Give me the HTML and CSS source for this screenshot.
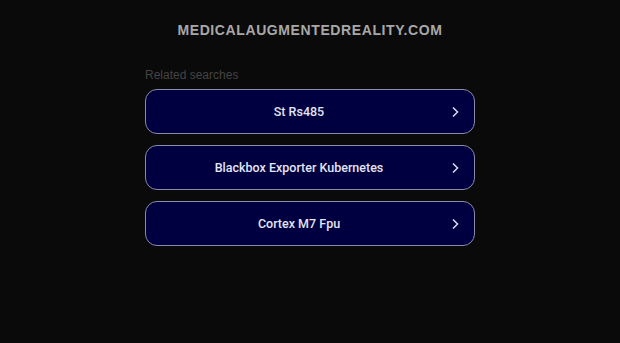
FILE: index.html
```html
<!DOCTYPE html>
<html lang="en">
<head>
    <meta charset="UTF-8">
    <meta name="viewport" content="width=device-width, initial-scale=1.0">
    <title>medicalaugmentedreality.com</title>
    <link rel="stylesheet" href="styles.css">
</head>
<body>
    <div class="header">
        <h1 class="domain">medicalaugmentedreality.com</h1>
    </div>
    <div class="container">
        <p class="related">Related searches</p>
        <a class="search-link" href="#">
            <span>St Rs485</span>
            <svg class="arrow" width="10" height="14" viewBox="0 0 10 14"><path d="M3 2.5 L7.5 7 L3 11.5" fill="none" stroke="#dde" stroke-width="1.5"/></svg>
        </a>
        <a class="search-link" href="#">
            <span>Blackbox Exporter Kubernetes</span>
            <svg class="arrow" width="10" height="14" viewBox="0 0 10 14"><path d="M3 2.5 L7.5 7 L3 11.5" fill="none" stroke="#dde" stroke-width="1.5"/></svg>
        </a>
        <a class="search-link" href="#">
            <span>Cortex M7 Fpu</span>
            <svg class="arrow" width="10" height="14" viewBox="0 0 10 14"><path d="M3 2.5 L7.5 7 L3 11.5" fill="none" stroke="#dde" stroke-width="1.5"/></svg>
        </a>
    </div>
</body>
</html>
```

FILE: styles.css
```css
body {
    font-family: Arial, 'Liberation Sans', Helvetica, sans-serif;
    background-color: #0a0a0a;
    margin: 0;
    padding: 0;
}

.header {
    padding-top: 20px;
    text-align: center;
}

.domain {
    margin: 0;
    font-size: 14px;
    font-weight: bold;
    letter-spacing: 0.6px;
    text-transform: uppercase;
    color: #a8a8a8;
    line-height: 20px;
}

.container {
    width: 330px;
    margin: 0 auto;
    padding-top: 27px;
}

.related {
    margin: 0 0 6px;
    font-size: 12px;
    line-height: 16px;
    color: #444;
}

.search-link {
    position: relative;
    display: flex;
    justify-content: center;
    align-items: center;
    height: 43px;
    padding-right: 22px;
    margin-bottom: 11px;
    background-color: #000040;
    border: 1px solid #8a8aaa;
    border-radius: 12px;
    color: #e4e4f4;
    font-family: Roboto, Arial, sans-serif;
    font-weight: 500;
    font-size: 12.5px;
    text-decoration: none;
}

.arrow {
    position: absolute;
    right: 14px;
    top: 15px;
}
```
